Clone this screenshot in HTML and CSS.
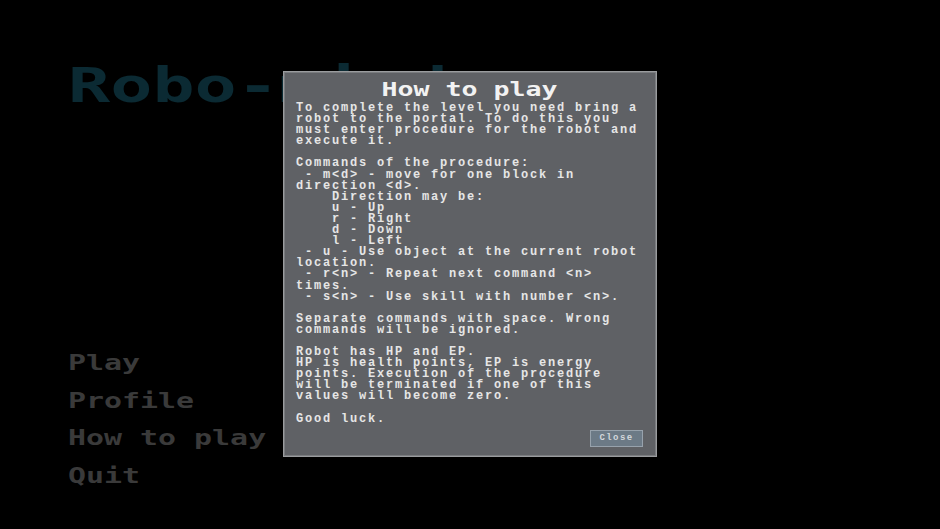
FILE: index.html
```html
<!DOCTYPE html>
<html lang="en">
<head>
<meta charset="utf-8">
<title>Robo-mind</title>
<link rel="stylesheet" href="styles.css">
</head>
<body>
<div class="screen">
  <div class="main">
    <h1 class="logo">Robo-mind</h1>
    <nav class="menu">
      <div class="menu-item">Play</div>
      <div class="menu-item">Profile</div>
      <div class="menu-item">How to play</div>
      <div class="menu-item">Quit</div>
    </nav>
  </div>
  <div class="dialog">
    <h2 class="dialog-title">How to play</h2>
    <div class="dialog-text">To complete the level you need bring a
robot to the portal. To do this you
must enter procedure for the robot and
execute it.

Commands of the procedure:
 - m&lt;d&gt; - move for one block in
direction &lt;d&gt;.
    Direction may be:
    u - Up
    r - Right
    d - Down
    l - Left
 - u - Use object at the current robot
location.
 - r&lt;n&gt; - Repeat next command &lt;n&gt;
times.
 - s&lt;n&gt; - Use skill with number &lt;n&gt;.

Separate commands with space. Wrong
commands will be ignored.

Robot has HP and EP.
HP is health points, EP is energy
points. Execution of the procedure
will be terminated if one of this
values will become zero.

Good luck.</div>
    <div class="dialog-actions">
      <button class="btn-close">Close</button>
    </div>
  </div>
</div>
</body>
</html>
```
FILE: styles.css
```css
html, body {
  margin: 0;
  padding: 0;
  background: #000;
}
.screen {
  position: relative;
  width: 940px;
  height: 529px;
  background: #000;
  overflow: hidden;
}
.main {
  display: flex;
  flex-direction: column;
  padding: 58px 0 0 68px;
}
.logo {
  margin: 0;
  font-family: "DejaVu Sans Mono", monospace;
  font-weight: bold;
  font-size: 48px;
  line-height: 54px;
  letter-spacing: 0;
  color: #0b2a33;
  white-space: nowrap;
  transform: scaleX(1.46);
  transform-origin: left center;
}
.menu {
  display: flex;
  flex-direction: column;
  margin-top: 232px;
}
.menu-item {
  font-family: "DejaVu Sans Mono", monospace;
  font-weight: bold;
  font-size: 22px;
  line-height: 37.7px;
  color: #3a3a3a;
  white-space: nowrap;
  transform: scaleX(1.36);
  transform-origin: left center;
}
.dialog {
  position: absolute;
  left: 283px;
  top: 71px;
  width: 374px;
  height: 386px;
  box-sizing: border-box;
  background: #5f6165;
  border: 1px solid #9a9c9e;
  box-shadow: inset 0 0 0 1px #7a7c7f;
  padding: 6px 13px 9px 12px;
  display: flex;
  flex-direction: column;
}
.dialog-title {
  margin: 0;
  text-align: center;
  font-family: "DejaVu Sans Mono", monospace;
  font-weight: bold;
  font-size: 20px;
  line-height: 22px;
  color: #f2f2f2;
  transform: scaleX(1.33);
  transform-origin: center center;
}
.dialog-text {
  margin-top: 3px;
  font-family: "Liberation Mono", monospace;
  font-weight: bold;
  font-size: 12px;
  line-height: 11.1px;
  letter-spacing: 1.8px;
  color: #e6e6e6;
  white-space: pre;
}
.dialog-actions {
  margin-top: auto;
  display: flex;
  justify-content: flex-end;
}
.btn-close {
  width: 53px;
  height: 17px;
  padding: 0;
  box-sizing: border-box;
  background: #6c7a86;
  border: 1px solid #97a2ac;
  color: #d3d7db;
  font-family: "Liberation Mono", monospace;
  font-weight: bold;
  font-size: 9px;
  letter-spacing: 1.4px;
  line-height: 15px;
}
```
